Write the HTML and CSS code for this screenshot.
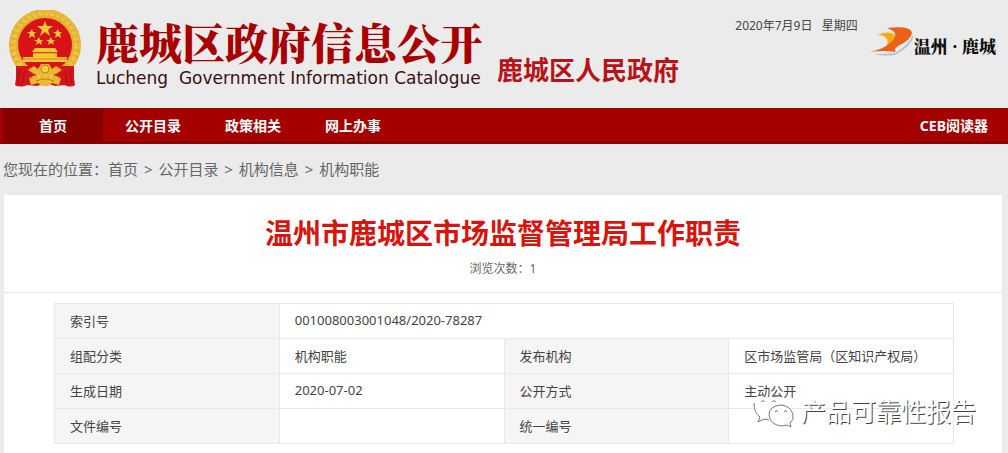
FILE: index.html
```html
<!DOCTYPE html>
<html lang="zh-CN">
  <head>
    <meta charset="UTF-8" />
    <meta name="viewport" content="width=device-width, initial-scale=1.0" />
    <title>温州市鹿城区市场监督管理局工作职责</title>
    <link rel="stylesheet" href="styles.css">
  </head>

  <body>
    <header class="header">
      <svg class="emblem" viewBox="0 0 76 78" aria-hidden="true">
        <path d="M10 55 L7 75 Q13 78 19 75 L29 76 L38 73 L47 76 L57 75 Q62 78 67 75 L64 55Z" fill="#d3161a"/>
        <circle cx="37" cy="35" r="36" fill="#e5b030"/>
        <circle cx="37" cy="35" r="32" fill="none" stroke="#efc545" stroke-width="5" stroke-dasharray="4 2"/>
        <circle cx="37" cy="35" r="33" fill="none" stroke="#d39b25" stroke-width="1" stroke-dasharray="2 4"/>
        <circle cx="37" cy="35" r="27" fill="#d9121a"/>
        <g fill="#f6c934">
          <path d="M37 11l2 5h6l-5 4 2 6-5-4-5 4 2-6-5-4h6z"/>
          <path d="M24 19l1 3h3l-2 2 1 4-3-2-3 2 1-4-3-2h3z"/>
          <path d="M50 19l1 3h3l-2 2 1 4-3-2-3 2 1-4-3-2h3z"/>
          <path d="M31 27l1 3h3l-2 2 1 3-3-2-3 2 1-3-3-2h3z"/>
          <path d="M43 27l1 3h3l-2 2 1 3-3-2-3 2 1-3-3-2h3z"/>
          <path d="M27 38h20l3 4H24zM25 43h24v4h10v5H15v-5h10z"/>
        </g>
        <path d="M15 49h44M25 43h24" stroke="#c98719" stroke-width="1"/>
        <path d="M8 56h13l7 9-7 3-2 7-11 1zM66 56H53l-7 9 7 3 2 7 11 1z" fill="#d3161a"/>
        <path d="M12 59l-2 15M17 60l-3 15M62 59l2 15M57 60l3 15" stroke="#a80e13" stroke-width="1"/>
        <path d="M20 60l6-4 4 3 3-5h8l3 5 4-3 6 4-6 4-6-1-3 2-2-3-2 3-3-2-6 1z" fill="#edb933"/>
        <circle cx="37" cy="59" r="4" fill="#f5ce45" stroke="#c17f16" stroke-width="1"/>
        <path d="M21 68l9 1 7-2 7 2 9-1-2 7-7-2-4 3h-6l-4-3-7 2z" fill="#edb933"/>
        <path d="M28 71q9-4 18 0" fill="none" stroke="#c17f16"/>
      </svg>

      <div class="site-name">
        <div class="site-title">鹿城区政府信息公开</div>
        <div class="site-subtitle">Lucheng&nbsp; Government Information Catalogue</div>
      </div>
      <div class="org-name">鹿城区人民政府</div>

      <div class="header-right">
        <div class="date">2020年7月9日&nbsp;&nbsp; 星期四</div>
        <div class="city">
          <svg class="city-logo" viewBox="0 0 44 32" aria-hidden="true">
            <path d="M4 28 Q16 28 25 27 Q40 18 43 8 Q45 18 25 29 Q14 31 4 28Z" fill="#a9c7de"/>
            <path d="M7 9 Q23 3 26 12 Q25 20 14 24 Q20 15 16 12 Q13 9 7 9Z" fill="#f6ae17"/>
            <path d="M17 2 Q41-1 42 7 Q41 14 28 20 Q23 23 26 26 Q13 24 0 26 Q14 23 20 17 Q32 7 17 2Z" fill="#eb6118"/>
          </svg>
          <span>温州 · 鹿城</span>
        </div>
      </div>
    </header>

    <nav class="nav">
      <a class="active" href="#">首页</a>
      <a href="#">公开目录</a>
      <a href="#">政策相关</a>
      <a href="#">网上办事</a>
      <a class="reader" href="#">CEB阅读器</a>
    </nav>

    <div class="breadcrumb">
      <span>您现在的位置：</span><a href="#">首页</a>
      <span class="sep">&gt;</span> <a href="#">公开目录</a>
      <span class="sep">&gt;</span> <a href="#">机构信息</a>
      <span class="sep">&gt;</span> <a href="#">机构职能</a>
    </div>

    <main class="content">
      <div class="article-head">
        <h1>温州市鹿城区市场监督管理局工作职责</h1>
        <p>浏览次数：1</p>
      </div>

      <div class="info-wrap">
        <table class="info">
          <tr>
            <th scope="row">索引号</th>
            <td colspan="3">001008003001048/2020-78287</td>
          </tr>
          <tr>
            <th scope="row">组配分类</th>
            <td>机构职能</td>
            <th scope="row">发布机构</th>
            <td>区市场监管局（区知识产权局）</td>
          </tr>
          <tr>
            <th scope="row">生成日期</th>
            <td>2020-07-02</td>
            <th scope="row">公开方式</th>
            <td>主动公开</td>
          </tr>
          <tr>
            <th scope="row">文件编号</th>
            <td></td>
            <th scope="row">统一编号</th>
            <td></td>
          </tr>
        </table>
      </div>

      <div class="watermark">
        <svg viewBox="0 0 42 34" aria-hidden="true">
          <path d="M6 22l-1 5 6-3q4 1 7 0 0-13 14-12Q29 3 16 3 2 3 1 12q0 6 5 10z" fill="#fff"/>
          <path d="M1 9q0 10 6 14l-2 5 6-3 5 1" fill="none" stroke="#777"/>
          <path d="M8 8q2-3 4 0M19 8q2-3 4 0" fill="none" stroke="#888"/>
          <path d="M28 11q-12 1-12 10 1 10 13 11l5-1 4 2-1-4q4-3 3-8-2-9-12-10z" fill="#fff" stroke="#777"/>
          <path d="M22 18q2-3 3 0M31 18q2-3 3 0" fill="none" stroke="#777"/>
        </svg>
        <span>产品可靠性报告</span>
      </div>
    </main>
  </body>
</html>
```

FILE: styles.css
```css
* {
  box-sizing: border-box;
}

body {
  margin: 0;
  min-height: 100vh;
  display: flex;
  flex-direction: column;
  background: #ebebeb;
  color: #444;
  font-family: "Noto Sans", "Noto Sans CJK SC", sans-serif;
}

a {
  color: inherit;
  text-decoration: none;
}

/* Header */
.header {
  display: flex;
  align-items: flex-start;
  height: 108px;
  padding: 0 12px 0 8px;
}

.emblem {
  width: 76px;
  height: 78px;
  margin: 10px 12px 0 0;
}

.site-name {
  padding-top: 19px;
  white-space: nowrap;
}

.site-title {
  color: #a80000;
  font-family: "Noto Serif CJK SC", "Noto Sans CJK SC", serif;
  font-size: 43px;
  font-weight: 900;
  line-height: 46px;
}

.site-subtitle {
  color: #3b1010;
  font-family: "DejaVu Sans", sans-serif;
  font-size: 17px;
  line-height: 26px;
}

.org-name {
  margin: 50px 0 0 14px;
  color: #b81418;
  font-size: 26px;
  font-weight: bold;
  line-height: 40px;
  white-space: nowrap;
}

.header-right {
  display: flex;
  margin-left: auto;
  white-space: nowrap;
}

.date {
  margin-right: 12px;
  padding-top: 16px;
  font-size: 12px;
  line-height: 20px;
}

.city {
  display: flex;
  align-items: center;
  height: 32px;
  margin-top: 26px;
  color: #111;
  font-family: "Noto Serif CJK SC", "Noto Sans CJK SC", serif;
  font-size: 17px;
  font-weight: 900;
}

.city-logo {
  width: 44px;
  height: 32px;
}

.city span {
  padding-top: 6px;
}

/* Navigation */
.nav {
  display: flex;
  height: 36px;
  padding: 0 20px 0 3px;
  background: #a40000;
  border-bottom: 3px solid #8a0000;
  color: #fff;
  font-size: 14px;
  font-weight: bold;
  line-height: 36px;
}

.nav a {
  width: 100px;
  text-align: center;
}

.nav .active {
  background: #860000;
}

.nav .reader {
  width: auto;
  margin-left: auto;
}

/* Breadcrumb */
.breadcrumb {
  padding: 10px 3px 11px;
  color: #666;
  font-size: 15px;
  line-height: 30px;
}

.breadcrumb .sep {
  margin: 0 2px;
}

/* Article */
.content {
  position: relative;
  flex: 1;
  margin: 0 6px 0 4px;
  background: #fff;
}

.article-head {
  padding: 15px 0 13px;
  border-bottom: 1px solid #e6e6e6;
  text-align: center;
}

.article-head h1 {
  margin: 0;
  color: #d7150f;
  font-size: 28px;
  line-height: 46px;
}

.article-head p {
  margin: 3px 0 0;
  color: #666;
  font-size: 12px;
  line-height: 20px;
}

.info-wrap {
  padding: 10px 48px 0 50px;
}

.info {
  width: 100%;
  border-collapse: collapse;
  table-layout: fixed;
  font-size: 13px;
}

.info th,
.info td {
  height: 35px;
  padding: 0 15px 2px;
  border: 1px solid #e8e8e8;
  font-weight: normal;
  text-align: left;
  white-space: nowrap;
}

.info th {
  background: #f5f5f5;
}

/* Watermark over the table */
.watermark {
  position: absolute;
  right: 26px;
  bottom: 24px;
  display: flex;
  align-items: center;
  gap: 6px;
  color: #fff;
  font-size: 25px;
  line-height: 36px;
  text-shadow: 1px 1px 0 #444;
}

.watermark svg {
  width: 42px;
  height: 34px;
}
```
